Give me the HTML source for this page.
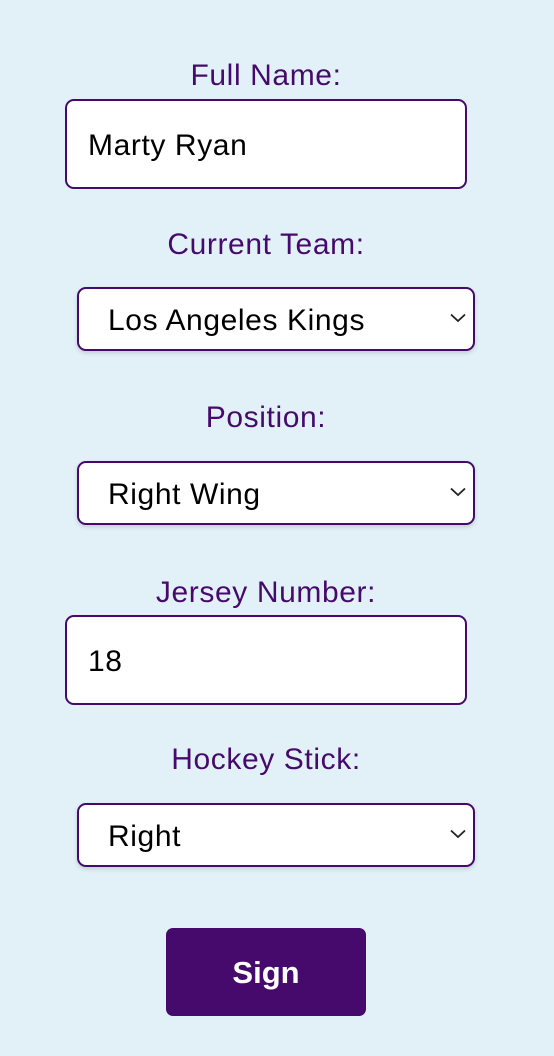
<!DOCTYPE html>
<html><head><meta charset="utf-8"><style>
html,body{margin:0;padding:0;}
body{width:554px;height:1056px;background:#e2f1f8;position:relative;overflow:hidden;font-family:"Liberation Sans",sans-serif;}
.lbl{position:absolute;left:0;width:532px;text-align:center;color:#450a6b;font-size:30px;letter-spacing:0.6px;line-height:32px;}
.box{position:absolute;background:#fff;border:2px solid #450a6b;box-sizing:border-box;border-radius:9px;color:#000;font-size:30px;letter-spacing:0.6px;}
.inp{left:65px;width:402px;height:90px;line-height:90px;padding-left:21px;}
.sel{left:77px;width:398px;height:64px;line-height:64px;padding-left:29px;box-shadow:0 2px 5px rgba(0,0,0,0.15);}
.sel svg{position:absolute;right:7px;top:24px;}
.btn{position:absolute;left:166px;top:928px;width:200px;height:88px;background:#450a6b;border-radius:7px;color:#fff;font-weight:bold;font-size:31px;line-height:90px;text-align:center;}
</style></head><body>
<div class="lbl" style="top:60px">Full Name:</div>
<div class="box inp" style="top:99px">Marty Ryan</div>
<div class="lbl" style="top:229px">Current Team:</div>
<div class="box sel" style="top:287px">Los Angeles Kings<svg width="16" height="10" viewBox="0 0 16 10"><path d="M1 1.5 L8 8 L15 1.5" fill="none" stroke="#222" stroke-width="1.8"/></svg></div>
<div class="lbl" style="top:402px">Position:</div>
<div class="box sel" style="top:461px">Right Wing<svg width="16" height="10" viewBox="0 0 16 10"><path d="M1 1.5 L8 8 L15 1.5" fill="none" stroke="#222" stroke-width="1.8"/></svg></div>
<div class="lbl" style="top:577px">Jersey Number:</div>
<div class="box inp" style="top:615px">18</div>
<div class="lbl" style="top:744px">Hockey Stick:</div>
<div class="box sel" style="top:803px">Right<svg width="16" height="10" viewBox="0 0 16 10"><path d="M1 1.5 L8 8 L15 1.5" fill="none" stroke="#222" stroke-width="1.8"/></svg></div>
<div class="btn">Sign</div>
</body></html>
